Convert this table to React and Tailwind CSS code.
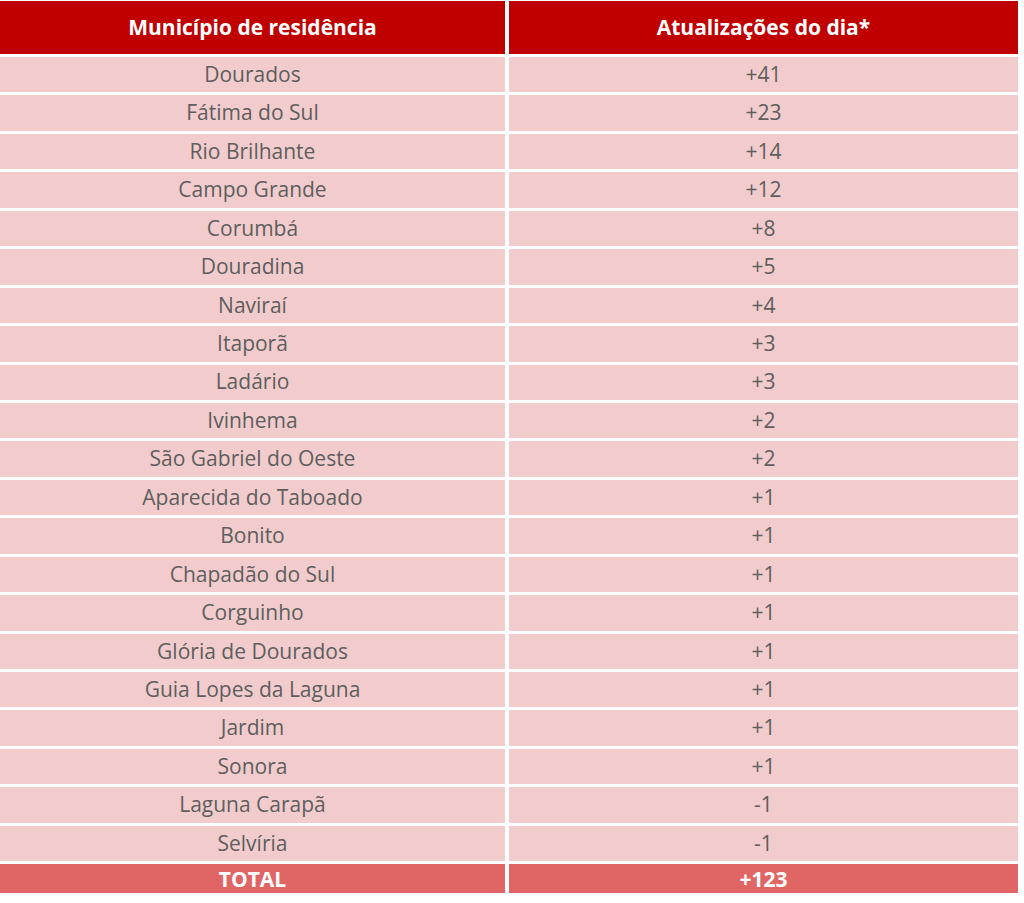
import { Fragment } from "react";

const rows = [
  ["Dourados", "+41"],
  ["Fátima do Sul", "+23"],
  ["Rio Brilhante", "+14"],
  ["Campo Grande", "+12"],
  ["Corumbá", "+8"],
  ["Douradina", "+5"],
  ["Naviraí", "+4"],
  ["Itaporã", "+3"],
  ["Ladário", "+3"],
  ["Ivinhema", "+2"],
  ["São Gabriel do Oeste", "+2"],
  ["Aparecida do Taboado", "+1"],
  ["Bonito", "+1"],
  ["Chapadão do Sul", "+1"],
  ["Corguinho", "+1"],
  ["Glória de Dourados", "+1"],
  ["Guia Lopes da Laguna", "+1"],
  ["Jardim", "+1"],
  ["Sonora", "+1"],
  ["Laguna Carapã", "-1"],
  ["Selvíria", "-1"],
];

export default function App() {
  return (
    <div className="w-[1024px] h-[903px] bg-white pt-px font-['Open_Sans',sans-serif]">
      <div className="grid grid-cols-[505px_509px] gap-x-[4px] gap-y-[3px]">
        <div className="h-[53px] bg-[#c00000] flex items-center justify-center text-white font-bold text-[21px]">
          Município de residência
        </div>
        <div className="h-[53px] bg-[#c00000] flex items-center justify-center text-white font-bold text-[21px]">
          Atualizações do dia*
        </div>
        {rows.map(([city, n]) => (
          <Fragment key={city}>
            <div className="h-[35.45px] bg-[#f2cccc] flex items-center justify-center text-[#5e5e5e] text-[21px]">
              {city}
            </div>
            <div className="h-[35.45px] bg-[#f2cccc] flex items-center justify-center text-[#5e5e5e] text-[21px]">
              {n}
            </div>
          </Fragment>
        ))}
        <div className="h-[29px] bg-[#e06666] flex items-center justify-center pt-[3px] text-white font-bold text-[21px]">
          TOTAL
        </div>
        <div className="h-[29px] bg-[#e06666] flex items-center justify-center pt-[3px] text-white font-bold text-[21px]">
          +123
        </div>
      </div>
    </div>
  );
}
